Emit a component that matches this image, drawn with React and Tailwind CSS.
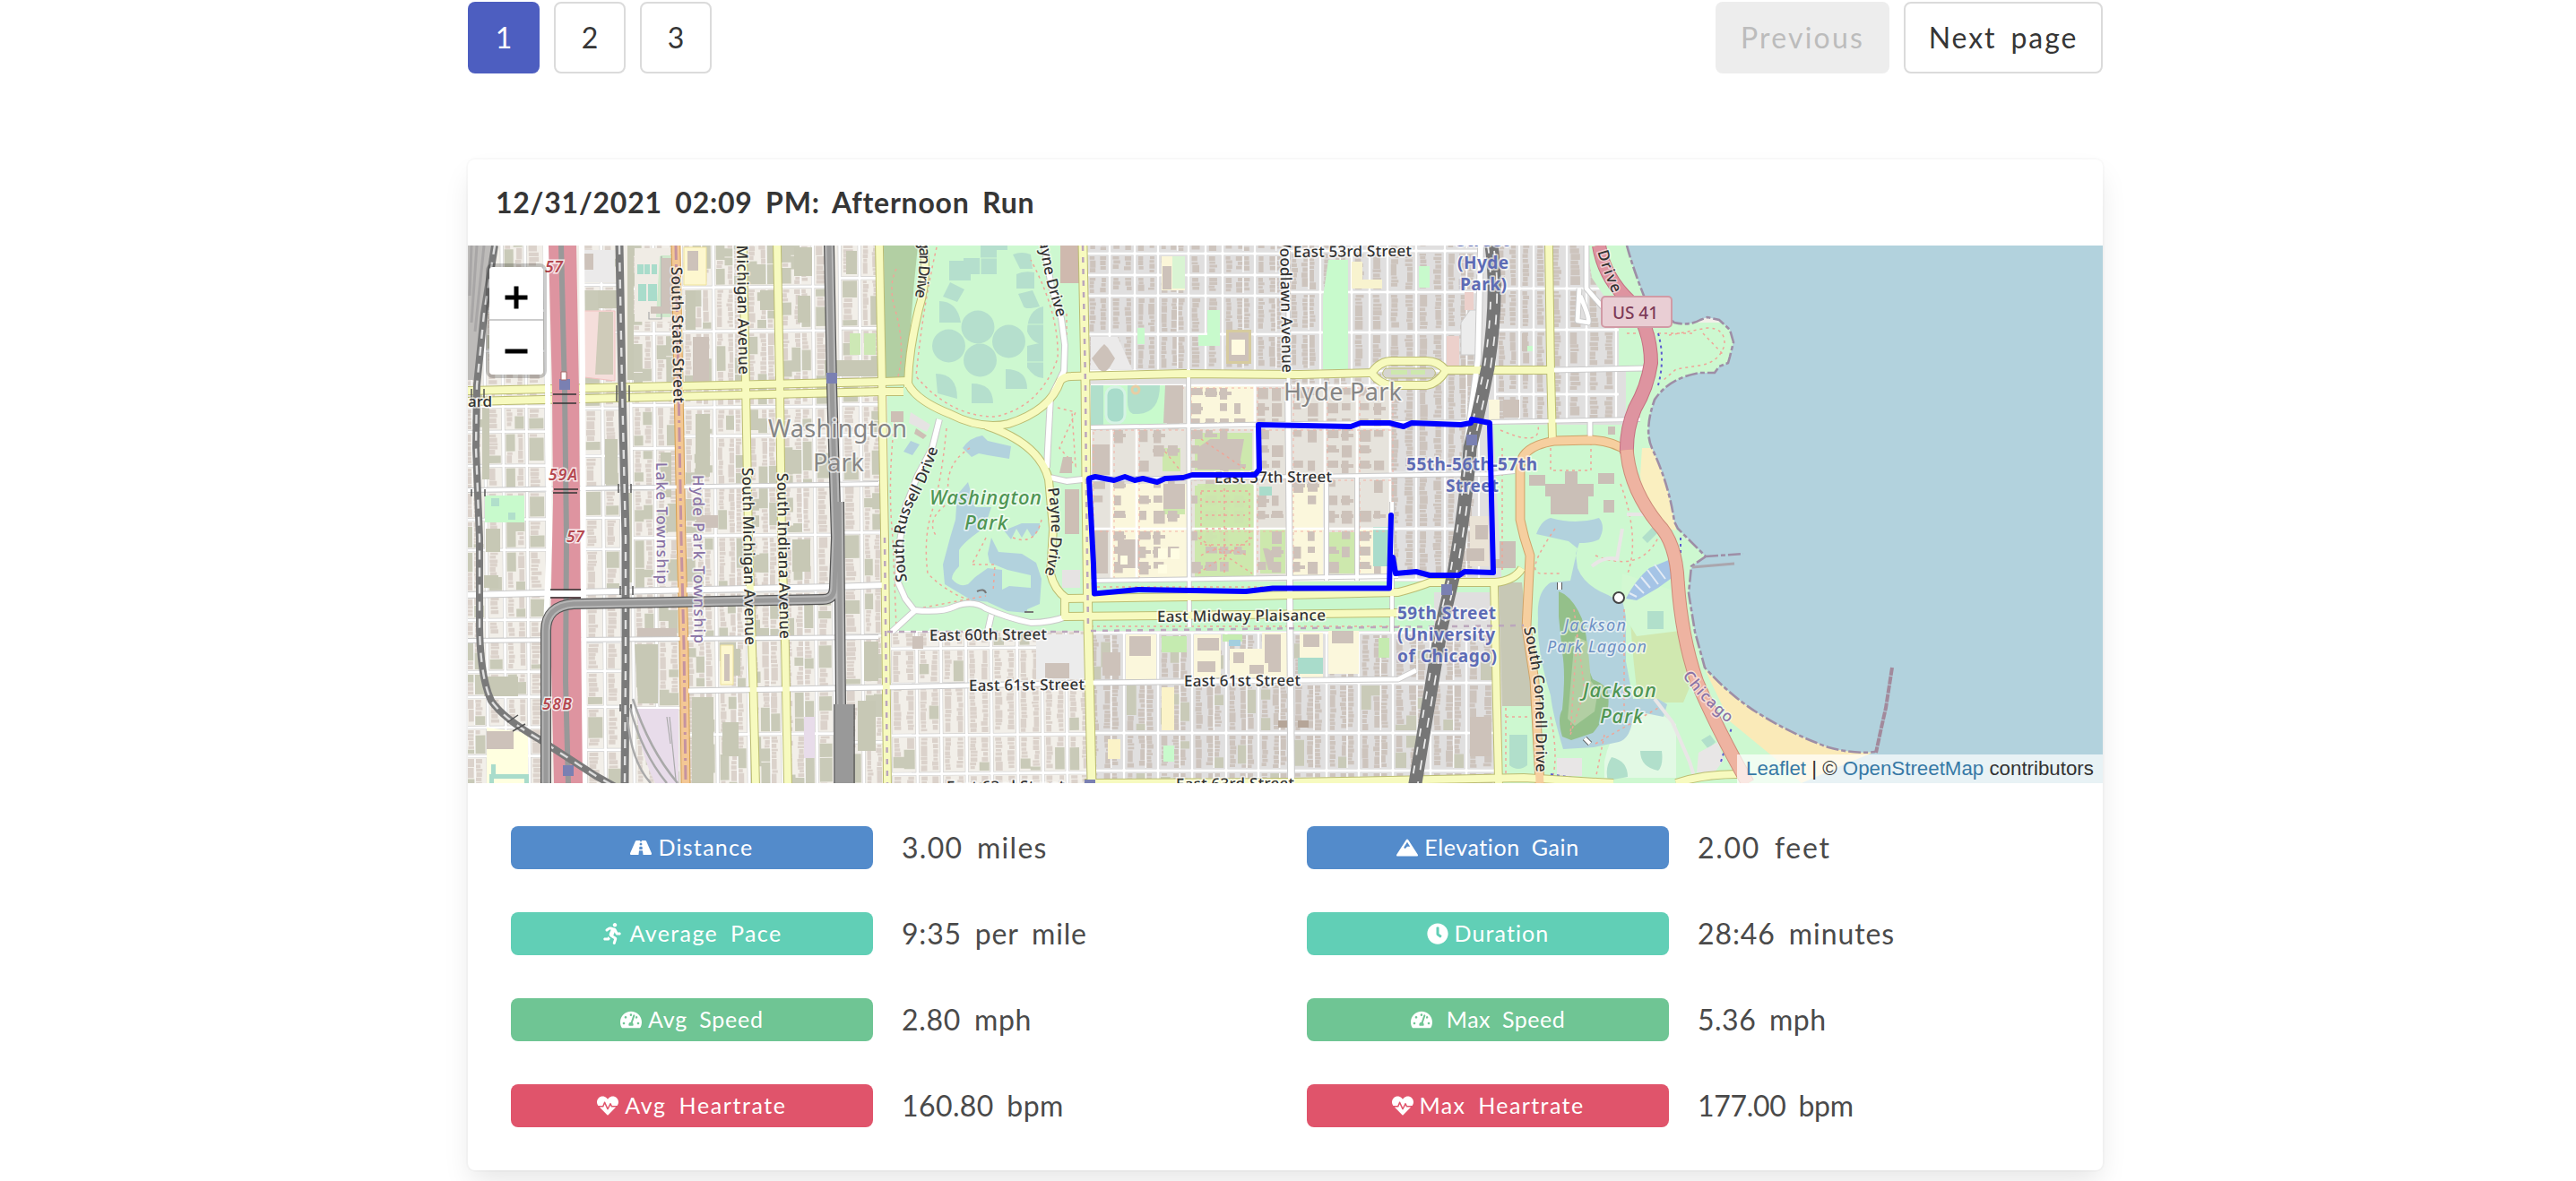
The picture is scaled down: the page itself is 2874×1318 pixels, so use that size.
import React from "react";
import { FaRoad, FaMountain, FaRunning, FaClock, FaTachometerAlt, FaHeartbeat } from "react-icons/fa";

/* ---------- map geometry ---------- */

// Small deterministic generator so that the city blocks are the same on each render.
function random(seed) {
  let s = seed;
  return () => {
    s = (s * 1664525 + 1013904223) % 4294967296;
    return s / 4294967296;
  };
}

const rect = (x, y, w, h) => `M${x.toFixed(1)} ${y.toFixed(1)}h${w.toFixed(1)}v${h.toFixed(1)}h${(-w).toFixed(1)}z`;

function cityBlocks({ xs, ys, seed, parcelChance, courts = false }) {
  const r = random(seed);
  let buildings = "";
  let parcels = "";
  let alleys = "";
  for (let i = 0; i < xs.length - 1; i++) {
    for (let j = 0; j < ys.length - 1; j++) {
      const x0 = xs[i] + 3;
      const y0 = ys[j] + 3;
      const w = xs[i + 1] - xs[i] - 6;
      const h = ys[j + 1] - ys[j] - 6;
      if (w < 5 || h < 5) continue;
      if (courts) {
        for (let yy = y0; yy < y0 + h - 6; yy += 17) {
          for (let xx = x0; xx < x0 + w - 6; xx += 16) {
            if (r() < 0.78) {
              buildings += rect(xx, yy, 7 + r() * 6, 7 + r() * 8);
              if (r() < 0.5) buildings += rect(xx - 1, yy + 4, 14, 4);
            }
          }
        }
        continue;
      }
      const n = Math.max(1, Math.round(w / 11));
      const cw = w / n;
      for (let c = 0; c < n; c++) {
        let y = y0;
        const cx = x0 + c * cw;
        while (y < y0 + h - 3) {
          if (r() < parcelChance) {
            const ph = Math.min(8 + r() * 26, y0 + h - y);
            parcels += rect(cx, y, cw, ph);
            y += ph + 1;
            continue;
          }
          const bh = Math.min(2.5 + r() * (r() < 0.2 ? 12 : 3), y0 + h - y);
          const bw = cw * (0.45 + r() * 0.25);
          buildings += rect(cx + (c % 2 ? cw - bw - 1 : 1) + (r() - 0.5), y, bw, bh);
          y += bh + 0.4 + r() * 0.9;
        }
        if (c % 2 === 1 && c < n - 1) alleys += `M${(cx + cw).toFixed(1)} ${y0}v${h}`;
      }
    }
  }
  const streets =
    xs.map((x) => `M${x} ${ys[0]}V${ys[ys.length - 1]}`).join("") +
    ys.map((y) => `M${xs[0]} ${y}H${xs[xs.length - 1]}`).join("");
  return { buildings, parcels, alleys, streets };
}

const ZONES = [
  { xs: [500, 541, 561, 587, 609], ys: [250, 300, 345, 390, 432, 452, 480, 518, 546, 578, 612, 660, 690, 712, 748, 776, 810, 842, 900], seed: 11, parcelChance: 0.1 },
  { xs: [650, 672, 692], ys: [250, 317, 370, 430, 455, 508, 545, 577, 612, 660, 715, 748, 788, 836, 900], seed: 23, parcelChance: 0.08 },
  { xs: [704, 730, 757], ys: [250, 322, 372, 430, 452, 500, 545, 600, 660, 714, 790, 900], seed: 29, parcelChance: 0.14 },
  { xs: [761, 797, 832, 870, 908, 928], ys: [250, 321, 370, 430, 455, 487, 543, 598, 660, 714, 771, 820, 900], seed: 37, parcelChance: 0.1 },
  { xs: [938, 960, 984], ys: [250, 312, 368, 425, 453, 487, 540, 596, 655, 711, 768, 830, 900], seed: 41, parcelChance: 0.14 },
  { xs: [990, 1020, 1047, 1075, 1103, 1132, 1160, 1187, 1214], ys: [706, 726, 766, 823, 866, 900], seed: 43, parcelChance: 0.045 },
  { xs: [1212, 1238, 1266, 1292, 1326, 1345, 1364, 1400, 1437], ys: [250, 283, 307, 330, 373, 414], seed: 53, parcelChance: 0, east: true },
  { xs: [1437, 1473, 1508, 1528, 1548, 1580, 1612, 1650], ys: [250, 280, 326, 371, 414, 472, 528, 590, 647], seed: 59, parcelChance: 0, east: true },
  { xs: [1668, 1695, 1711, 1728, 1748, 1770, 1803, 1835], ys: [250, 322, 368, 412, 440, 470], seed: 61, parcelChance: 0, east: true },
  { xs: [1214, 1254, 1292, 1330, 1368, 1404, 1441, 1480, 1516, 1554, 1596, 1636, 1668], ys: [706, 762, 818, 860, 900], seed: 67, parcelChance: 0.035, east: true },
];
const CAMPUS = cityBlocks({ xs: [1217, 1240, 1268, 1326, 1400, 1440, 1478, 1514, 1551], ys: [430, 477, 533, 590, 647], seed: 71, parcelChance: 0, courts: true });
const CITY = ZONES.map((z) => ({ ...cityBlocks(z), east: z.east }));

// Roads: colour of the line, colour of its edge, width, path
const ROADS = [
  ["#fff", "#c9c9c9", 6, "M522 664L640 661L930 655L986 653"],
  ["#fff", "#c9c9c9", 5, "M765 771L986 767L1215 762L1560 758L1580 748"],
  ["#fff", "#c9c9c9", 4, "M522 547L980 540M522 715L980 711M1217 477L1440 473L1660 471L1830 468M1217 535L1660 529L1690 526"],
  ["#fff", "#c9c9c9", 4, "M1217 648L1560 643M1326 412L1327 700M1437 280L1439 874M1480 530V648M1514 530V648M1553 560V705"],
  ["#fff", "#c9c9c9", 6, "M1437 430L1441 874M1652 274L1649 400L1633 520"],
  ["#fff", "#c9c9c9", 6, "M1165 274L1173 320L1184 355L1188 385L1187 414L1172 444L1169 500L1168 522M1172 533L1190 537L1208 535"],
  ["#fff", "#c9c9c9", 6, "M1048 468L1040 500L1024 530L1010 566L1003 610L1002 650L1010 668L1020 681Q1050 684 1065 677Q1085 669 1100 679Q1125 690 1150 695Q1172 695 1190 688M1020 682L995 705M1106 686L1102 704"],
  ["#fff", "#c9c9c9", 5, "M1733 413L1835 411M1770 274V322L1790 345M1762 322L1760 358L1772 360Q1774 355 1763 330M1774 470V492"],
  ["#f7fabf", "#bcbd72", 8, "M522 436L985 426L1013 425L1013 432M522 448L985 437L1008 437"],
  ["#f7fabf", "#bcbd72", 8, "M829 274L832 430L835 600L840 750L843 874M867 274L870 430L872 600L876 720L879 874"],
  ["#f7fabf", "#bcbd72", 8, "M981 274L984 430L987 600L990 874"],
  ["#f7fabf", "#bcbd72", 8, "M1030 274Q1036 310 1025 345Q1014 390 1013 428Q1022 447 1060 462Q1095 480 1125 473Q1172 458 1183 425Q1187 420 1195 420L1320 417L1450 418L1530 416Q1540 403 1552 403L1592 403Q1604 403 1613 413L1733 413M1530 416Q1540 429 1552 430L1592 430Q1604 428 1613 414"],
  ["#f7fabf", "#bcbd72", 8, "M1100 475Q1160 495 1170 535L1175 590L1172 640Q1176 658 1190 668L1400 665L1560 661Q1580 656 1595 650L1668 650Q1690 648 1698 634M1188 664V688L1300 687L1560 684"],
  ["#f7fabf", "#bcbd72", 9, "M1208 274L1211 430L1212 550L1214 700L1218 874"],
  ["#f7fabf", "#bcbd72", 8, "M1728 274L1730 410L1732 492M1667 650L1670 790L1672 874"],
  ["#f7fabf", "#bcbd72", 8, "M1210 874L1440 873L1700 868L1800 874M1870 874Q1900 864 1938 864"],
  ["#f6cf9f", "#cfa46a", 9, "M1818 505Q1800 492 1775 491L1735 492Q1696 498 1696 522L1696 580Q1700 600 1707 620L1703 700L1712 760L1718 874"],
  ["#f3c795", "#d5a050", 9, "M754 274L757 430L760 600L763 720L765 874"],
];

const RAIL = [
  [8, "M552 274L540 350L532 430L531 500L535 600L535 700Q536 756 548 782Q562 802 600 824L665 866L690 880"],
  [9, "M691 274L694 430L698 600L698 740L697 874"],
];

const EL_LINE = "M925 274L928 430L933 600L931 655Q931 669 918 669L640 674Q609 676 609 704V874";

const COAST = "M1815 274Q1822 300 1836 335L1868 360Q1885 364 1897 357L1905 354L1918 357L1930 368L1934 382L1930 398L1928 405L1918 409L1913 416L1896 416Q1862 422 1846 446Q1834 480 1843 500Q1862 540 1868 582L1872 590L1903 621L1887 632L1884 662L1891 705L1902 745Q1930 776 1960 795Q2000 820 2040 834Q2070 842 2092 839";

/* label: text, x, y, rotation, length, size, colour, weight, slant */
const LABELS = [
  ["Hyde Park", 1432, 447, 0, 132, 27, "#858585", 400],
  ["Washington", 857, 488, 0, 155, 27, "#858585", 400],
  ["Park", 907, 526, 0, 57, 27, "#858585", 400],
  ["Washington", 1037, 563, 0, 125, 22, "#4f9553", 500, "italic"],
  ["Park", 1076, 591, 0, 48, 22, "#4f9553", 500, "italic"],
  ["Jackson", 1766, 778, 0, 82, 22, "#4f9553", 500, "italic"],
  ["Park", 1785, 807, 0, 48, 22, "#4f9553", 500, "italic"],
  ["Jackson", 1745, 704, 0, 69, 18, "#6d90c4", 400, "italic"],
  ["Park Lagoon", 1726, 728, 0, 111, 18, "#6d90c4", 400, "italic"],
  ["Street", 1625, 275, 0, 59, 19, "#5d6bb5", 700],
  ["(Hyde", 1626, 300, 0, 57, 19, "#5d6bb5", 700],
  ["Park)", 1629, 324, 0, 52, 19, "#5d6bb5", 700],
  ["55th-56th-57th", 1569, 525, 0, 146, 19, "#5d6bb5", 700],
  ["Street", 1613, 549, 0, 59, 19, "#5d6bb5", 700],
  ["59th Street", 1559, 691, 0, 110, 19, "#5d6bb5", 700],
  ["(University", 1559, 715, 0, 109, 19, "#5d6bb5", 700],
  ["of Chicago)", 1559, 739, 0, 111, 19, "#5d6bb5", 700],
  ["East 53rd Street", 1443, 287, -0.5, 132, 17, "#333", 500],
  ["East 57th Street", 1355, 539, -0.5, 131, 17, "#333", 500],
  ["East Midway Plaisance", 1291, 694, -0.5, 188, 17, "#333", 500],
  ["East 60th Street", 1037, 715, -0.6, 131, 17, "#333", 500],
  ["East 61st Street", 1081, 771, -0.6, 129, 17, "#333", 500],
  ["East 61st Street", 1321, 766, -0.4, 130, 17, "#333", 500],
  ["East 63rd Street", 1312, 881, -0.4, 132, 17, "#333", 500],
  ["East 63rd Street", 1056, 884, -0.4, 132, 17, "#333", 500],
  ["ard", 522, 454, 0, 27, 17, "#333", 500],
  ["South Michigan Avenue", 821, 220, 89, 198, 17, "#333", 500],
  ["South State Street", 749, 298, 89, 152, 17, "#333", 500],
  ["Lake Township", 732, 516, 89.5, 136, 17, "#8973a6", 500],
  ["Hyde Park Township", 773, 530, 89.5, 188, 17, "#8973a6", 500],
  ["South Michigan Avenue", 828, 522, 89, 198, 17, "#333", 500],
  ["South Indiana Avenue", 867, 528, 89, 185, 17, "#333", 500],
  ["South Woodlawn Avenue", 1427, 207, 89, 209, 17, "#333", 500],
];

const CURVED = [
  ["russell", "M1012 649Q1002 590 1021 560Q1036 535 1048 496", "South Russell Drive", 156, "#333"],
  ["payne-s", "M1169 545Q1178 595 1166 640L1164 660", "Payne Drive", 97, "#333"],
  ["payne-n", "M1158 258Q1163 300 1172 330L1184 370", "Payne Drive", 99, "#333"],
  ["morgan", "M1022 240Q1030 290 1021 331L1019 350", "Morgan Drive", 92, "#333"],
  ["cornell", "M1700 701Q1710 745 1713 780L1714 875", "South Cornell Drive", 162, "#333"],
  ["shore", "M1770 220Q1778 280 1798 325L1810 350", "Shore Drive", 112, "#333"],
  ["chicago", "M1877 754Q1896 782 1929 808L1940 816", "Chicago", 74, "#8973a6"],
];

const ROUTE = "M1552 575L1550 656.5L1420 656.5L1390 660L1270 658L1221 662.5L1220 630L1215 534L1222 532L1243 536L1255 532L1266 536L1275 534L1291 538L1300 534L1320 533L1330 530L1400 530L1405 524L1404 474L1507 476L1518 472L1550 472L1566 476L1575 472L1630 474L1641 472L1642 468L1662 472L1666 639L1634 638L1628 642L1595 642L1580 638L1557 640L1554 622";

function Foot({ d, c = "#f0a598", w = 1.5 }) {
  return <path d={d} fill="none" stroke={c} strokeWidth={w} strokeDasharray="3 4" />;
}

function CityMap() {
  return (
    <svg className="block h-full w-full" viewBox="522 274 1824 600" fontFamily='"Noto Sans", sans-serif'>
      <rect x="522" y="274" width="1824" height="600" fill="#f2efe9" />
      <rect x="1212" y="274" width="640" height="600" fill="#e0dfdf" />

      {/* city blocks */}
      {CITY.map((z, i) => (
        <g key={i} transform={z.east ? undefined : "rotate(-0.5 760 430)"}>
          <path d={z.parcels} fill="#c9cab8" />
          <path d={z.buildings} fill={z.east ? "#cdc4bd" : "#dbd2cb"} />
          <path d={z.alleys} stroke="#fafafa" strokeWidth="1.4" fill="none" />
          <path d={z.streets} stroke="#cfcfcf" strokeWidth="4" fill="none" />
          <path d={z.streets} stroke="#fff" strokeWidth="2.8" fill="none" />
        </g>
      ))}

      {/* vacant lots, yards and schools in the west */}
      <g fill="#c7c8b5">
        <path d="M667 324h22v20h-22zM538 455h8v80h-8zM765 324h11v44h-11zM848 324h17v22h-17zM920 402h56v18h-56zM708 719h26v66h-22zM772 778h24v96h-24zM806 806h18v38h-18zM700 274h7v150h-7zM886 276h20v32h-20zM890 330h14v30h-14zM944 280h12v26h-12zM952 402h26v18h-26zM540 642h16v14h-16zM540 755h38v22h-38zM675 490h14v50h-14zM737 505h12v50h-12zM700 550h5v100h-5zM964 716h16v44h-16zM957 782h20v56h-20zM776 462h16v70h-16zM884 602h20v36h-20zM810 724h16v30h-16zM542 590h16v26h-16z" />
      </g>
      <path d="M652 347h34v78l-34 -4z" fill="#f5dedb" stroke="#f3c1c0" />
      <path d="M668 348h16v70h-20z" fill="#cfcbb9" />
      <path d="M650 279h36v36h-36z" fill="#ebeaea" />
      <path d="M708 277h40v82h-40z" fill="#f0ece5" />
      <path d="M736 286h12v68h-16zM738 286h-1v-1h12v3z" fill="#cfe9cc" />
      <path d="M711 791h46v83h-26q-20-40-20-83z" fill="#e8dcea" />
      <path d="M738 286v70h-14l0-8M744 800l4 30M747 800l7 70" fill="none" stroke="#aaa" strokeWidth="1.2" />
      <path d="M541 553h44v30h-44z" fill="#c8facc" />
      <path d="M548 556h9v9h-9zM567 572h8v8h-8z" fill="#b1dfcb" />
      <path d="M543 812l46 6v56h-46z" fill="#ffffe0" />
      <path d="M522 274h28l-14 150h-14z" fill="#bdbbb9" />
      <g fill="#a9dccb">
        <path d="M711 295h7v11h-7zM719 295h6v11h-6zM727 295h6v11h-6zM712 317h9v19h-9zM723 317h10v19h-10z" />
        <path d="M548 853h5v12h-5zM546 864h44v10h-5v-5h-34v5h-5z" />
      </g>
      <path d="M948 372h12v24h-12zM964 372h13v24h-13z" fill="#cde8b5" />
      <path d="M763 276h25v42h-25z" fill="#fdf7cf" stroke="#eee29b" />
      <path d="M804 720h14v44h-14z" fill="#fdf7cf" stroke="#eee29b" />
      <path d="M897 800h12v46h-12z" fill="#e8dcea" />
      <g fill="#cdc2ba">
        <path d="M738 288h12v62h-24v-8h12zM773 376h18v50h-18zM767 280h12v22h-12zM650 283h12v18h-12zM711 701h44v11h-44zM543 816h30v20h-30zM1018 710h12v14h-12zM1640 800h24v44h-24zM777 575h24v14h-24zM808 730h6v30h-6z" />
      </g>
      <path d="M1156 708h54v50h-54z" fill="#ececec" />
      <path d="M1166 740h27v17h-27z" fill="#cdc2ba" />

      {/* lots in the east */}
      <path d="M1296 286h26v38h-26z" fill="#fbf6d8" />
      <path d="M1308 286h14v36h-14z" fill="#d9f4d3" />
      <path d="M1297 297h10v26h-10z" fill="#cdc2ba" />
      <path d="M1347 346h14v40h-24v-12h10zM1269 366h8v18h-8z" fill="#c8facc" />
      <path d="M1368 368h28v38h-28z" fill="#d6cb9f" />
      <path d="M1371 371h22v32h-22z" fill="#cdc2ba" />
      <path d="M1374 379h15v17h-15z" fill="#fffbe0" />
      <path d="M1217 376h30l16 36h-46z" fill="#ebeaea" />
      <path d="M1218 400l10-12 4-4 4 4 8 12 -6 10 -6 6 -6-4z" fill="#cdc2ba" />
      <path d="M1482 290h22v122h-28v-80z" fill="#c8facc" />
      <path d="M1508 292h12v20h22v10h-34z" fill="#f8f3cf" />
      <path d="M1583 297h12v24h-12zM1700 386h10v6h-10z" fill="#c8facc" />
      <path d="M1640 346l8 0 0 50 -18 0 0-36z" fill="#ececec" stroke="#ccc" />
      <path d="M1634 326h10v20h-10zM1614 375h14v34h-14z" fill="#ecd0cb" />
      <path d="M1698 372h6v20h-6zM1677 446h18v20h-18z" fill="#cdc2ba" />
      <path d="M1661 446h12v24h-12z" fill="#fbf7dc" />

      {/* university campus */}
      <path d="M1217 430h334v218h-334z" fill="#e6e3dc" />
      <path d="M1240 540h86v106h-86zM1327 430h73v46h-73zM1440 540h36v104h-36zM1516 590h34v50h-34z" fill="#fbf7dc" />
      <path d="M1333 542h66v102h-66zM1333 483h64v42h-64zM1297 500h20v26h-20zM1406 590h28v50h-28zM1482 594h30v46h-30zM1298 548h24v26h-24z" fill="#cde8ad" />
      <path d={CAMPUS.buildings} fill="#cdc2ba" />
      <path d="M1336 540h62v70h-62z" fill="#cde8ad" fillOpacity="0.9" />
      <path d="M1350 490h38l-6 34h-46v-24zM1247 602h24v32h-24zM1298 540h24v28h-24zM1218 496h20v34h-20zM1222 592h14v48h-14z" fill="#cdc2ba" />
      <path d="M1250 620h8v10h-8zM1292 612h10v12h-10zM1306 612h10v12h-10zM1292 630h10v10h-10z" fill="#fffde3" />
      <path d="M1532 588h18v44h-18zM1405 543h14v10h-14z" fill="#a9dccb" />
      <path d="M1409 612q8-2 12 8v16h-6z" fill="#cdc2ba" />
      <path d={CAMPUS.streets} stroke="#fff" strokeWidth="2.6" fill="none" />
      <path d={CAMPUS.streets} stroke="#f3b2a6" strokeWidth="1" strokeDasharray="3 4" fill="none" transform="translate(3 3)" />
      <Foot d="M1340 548h54v60h-54zM1340 620q20-14 52 0M1366 545v98M1340 490l50 34M1300 504l16 20M1337 640l60-40M1337 600l60 40M1345 560h44M1345 575h44M1345 590h44" />
      {/* athletic field */}
      <path d="M1217 430h83v44h-83z" fill="#c8facc" />
      <path d="M1217 430h14v44h-14z" fill="#b1dfcb" />
      <path d="M1258 430h36q0 34-30 32q-6-2-6-14z" fill="#b1dfcb" />
      <rect x="1234" y="432" width="21" height="40" rx="9" fill="#a9dccb" stroke="#d5f3e4" strokeWidth="3" />
      <circle cx="1267" cy="435" r="4" fill="none" stroke="#e6cda4" strokeWidth="3" />
      <path d="M1300 430h20v42h-22z" fill="#cdc2ba" />

      {/* midway */}
      <path d="M1190 649h480v12l-70 0v43h-410z" fill="#c9f7cd" />
      <path d="M1193 672h16v11h-16z" fill="#cde8ad" stroke="#efaea0" strokeDasharray="2 3" />
      <Foot d="M1217 655h330M1217 699h345" />
      <g>
        <path d="M1256 708h34v50h-34zM1332 708h30v48h-30zM1450 706h26v50h-26zM1372 724h56v34h-56zM1408 706h28v50h-28zM1482 704h34v48h-34z" fill="#fbf7dc" />
        <path d="M1260 710h24v22h-24zM1336 712h24v14h-24zM1336 738h20v12h-20zM1411 708h18v42h-14v-10h-4zM1486 704h24v14h-24zM1230 728h20v26h-20zM1454 708h18v14h-18zM1376 728h12v12h-12zM1394 742h16v10h-16z" fill="#cdc2ba" />
        <path d="M1448 734h28v18h-28z" fill="#a9dccb" />
        <path d="M1296 710h28v18h-28zM1538 712h12v22h-12zM1364 708h22v8h-22z" fill="#c5ebb0" />
        <path d="M1371 714h13v7h-13z" fill="#a3cfdf" />
        <path d="M1296 767h14v48h-14zM1236 825h14v22h-14z" fill="#fbf3c8" />
        <path d="M1298 832h12v18h-12z" fill="#c8facc" />
        <path d="M1426 804h14v8h-14zM1448 804h12v8h-12z" fill="#b5a598" />
      </g>

      {/* Washington Park */}
      <path d="M988 274H1206L1210 704H993Z" fill="#cdf8d0" />
      <path d="M986 274H1024Q1016 350 1012 424H987Z" fill="#b2cfa3" />
      <path d="M1183 274h22v42h-22z" fill="#cfb9ae" />
      <g fill="#b5dfcd">
        <circle cx="1091" cy="365" r="18.5" />
        <circle cx="1058.500" cy="386" r="18.500" />
        <circle cx="1125.500" cy="381" r="18.500" />
        <circle cx="1093.500" cy="402" r="18.500" />
        <path d="M1059 291h16v-3h18v18h-10v7h-24zM1094 274h30v5h-12v27h-18zM1060 315l16 8-8 14-16-6zM1048 336q20 0 24 24h-24zM1130 284q10-4 20 0l2 16h-14zM1134 306q8-4 20-2v18h-20zM1136 328l16-4 8 18q-16 4-18 0zM1164 342v42q-12 0-18-14q0-24 18-28zM1164 382v40q-10 0-18-12v-24zM1044 417q24 0 24 28l-22-6zM1122 412q24 0 24 22l-24 0zM1084 428q24 0 24 22l-24 0z" />
      </g>
      <path d="M1094 288h18M1094 288v18M1146 362h18M1146 404h18" stroke="#cdf8d0" strokeWidth="1" />
      <g fill="#b2d2dd">
        <path d="M1074 500q8-12 22-14l6 6 26 6-2 14-24-4-10-2-8 4zM1008 504l8-12 10 4-8 12z" />
        <path d="M1068 552l12-14 8 28h18l-4 12-8 14q-20 14-24 22l0 18q-8 8-8 14q8 10 18 6l8-8 14-10 16 2 0 28-12 8-22-2-30-18-2-22 8-30 6-20z" />
        <path d="M1106 600l8 16 26 2 16 10 6 18-2 28-14 6 0 4-22-2-22-10 0-6 24-12 24 2 0-14-26-6-20-8-2-10zM1120 592l8 10 6-12 6 10 6-10 6 10 8-10v-6l-20 0z" />
      </g>
      <Foot d="M1045 276Q1030 340 1022 420Q1060 465 1110 465Q1160 455 1180 400Q1182 350 1150 290M1000 300Q990 320 1000 350Q1010 390 1002 420" />
      <Foot d="M1056 478Q1050 540 1040 570Q1030 600 1035 640Q1060 665 1090 672M1060 560Q1030 580 1046 600M1082 500Q1050 520 1060 560M1100 600Q1090 620 1084 630L1110 630L1108 660M1130 600Q1155 610 1162 580M1180 455L1200 460L1182 500L1200 520L1196 460M1190 350V420" />
      <Foot d="M998 470Q990 540 996 600L1000 700M1030 678L1100 665" />
      <path d="M1016 460l22 14-4 8-20-10z" fill="#e6e3e3" />
      <path d="M994 459h14v12h-14zM1022 478l12 8-4 4-10-6zM1186 510h10v18h-14zM1188 546h16v50h-16z" fill="#cdbfb5" />
      <path d="M1185 636h20v20h-20z" fill="#e6e3e3" />
      <path d="M1090 660q8-4 10 2M1143 683h10" fill="none" stroke="#777" strokeWidth="2" />

      {/* lakefront parks */}
      <path d="M1770 274H1822L1850 360H1940V420H1880L1850 450V500L1880 600L1910 622L1892 640L1910 740L2000 830L2090 840L2060 874H1676V660L1666 474H1812V412H1806V355L1776 310Z" fill="#cdf8d0" />
      <path d="M1806 411h8v60h-8z" fill="#e0dfdf" />
      <path d="M1672 650h26q8 70 12 138h-34z" fill="#c7c8b5" />
      <path d="M1818 672l50 8 20 80-10 24h-50q-8-60-10-112z" fill="#d0e8b0" />
      <path d="M1810 640l60 20 4 44-48 6-18-30z" fill="#d3f8d2" />
      <path d="M1838 682h18v20h-18z" fill="#b1dfcb" />
      <path d="M1790 850q10-50 50-62l30 20 0 60-80 0z" fill="#e2f9e4" />
      <path d="M1832 500L1846 500Q1862 540 1870 592L1862 590Q1832 560 1830 530Z" fill="#faefc0" />
      <path d="M1902 747Q1930 776 1960 795Q2000 820 2040 834Q2070 842 2092 839L2010 874L1980 846L1930 805Z" fill="#faeab8" />
      <g fill="#b2d2dd">
        <path d="M1714 596q6-16 16-18q28 8 54 0q8 10 0 24q-8 4-22 4l-4 12 2 16q8 20 34 30q10 6 16 6l4 18 0 50 8 42 28 0 10 6-4 14-20-4-14 2q-2 26-16 30l-28 6-34 2q-12-40-14-60q-16-50-14-86q-2-30 14-40l22-2 4-18 4-18-10-8z" />
        <path d="M1814 668q10-20 26-34l24-10 12 4-4 12-22 16-24 14z" fill="#a5c4e6" />
      </g>
      <path d="M1818 662l8 4M1824 652l10 10M1831 644l10 12M1838 636l12 16M1846 630l12 16" stroke="#e3ebf5" strokeWidth="2" />
      <path d="M1739 660q12 4 22 22q8 14 10 40q-2 20 6 36l8 4 8 6q4 20-2 30q-10 16-14 20l-24 8-10-4q-6-20 0-30q4-40 0-64l-4-40z" fill="#94c08a" />
      <path d="M1757 710l14 6 4 44 8 10-4 24-22 16-8-8z" fill="#b2cfa3" />
      <circle cx="1806" cy="667" r="6" fill="#fff" stroke="#444" strokeWidth="2" />
      <path d="M1740 650v8M1768 824l6 6" stroke="#555" strokeWidth="6" />
      <path d="M1740 650v8M1768 824l6 6" stroke="#fff" strokeWidth="4" />
      <g fill="#cabfb7">
        <path d="M1746 526h14v14h18v14h-6v20h-42v-20h-6v-14h22zM1706 530h18v12h-18zM1783 528h18v12h-18zM1789 558h12v14h-12zM1794 476h8v9h-8z" />
        <path d="M1673 604h18v30h-26v-10h8z" />
      </g>
      <path d="M1640 576h22v56h-22z" fill="#eae3d6" />
      <path d="M1646 586h14v16h-14zM1636 612h20v14h-20z" fill="#cabfb7" />
      <g fill="#b1dfcb">
        <path d="M1684 820h20v34q-10 8-20 0zM1798 845q18 4 18 22l-22 4q-4-14 4-26zM1830 838h24q2 16-4 22q-20-4-20-22zM1832 600l14-14 6 6-14 14zM1898 826l10-6 6 8-8 8z" />
      </g>
      <path d="M1895 840l22-12 6 20-10 14-20 0zM1737 846h28v20h-28z" fill="#e8e6e6" />
      <Foot d="M1674 480Q1720 500 1716 475M1676 500V640M1735 590Q1700 640 1720 640L1740 640M1780 620Q1830 640 1850 600M1808 540Q1830 600 1816 640M1812 680L1812 800M1780 830L1850 790M1730 800Q1740 850 1730 874M1790 820L1780 870M1756 680L1768 770L1752 820L1760 700" />
      <Foot d="M1730 500V525H1775V492M1680 790V874M1680 800H1708M1815 372L1890 372M1862 374L1905 366Q1925 366 1924 385Q1918 405 1895 408L1870 412L1856 424M1900 372L1922 395" />
      <Foot d="M1850 372Q1858 400 1850 430M1875 600V630M1920 850L1932 812M1730 864L1790 874" c="#5b5bd0" w={2} />
      <path d="M1815 574Q1835 574 1840 574M1776 632Q1790 620 1804 624L1810 590M1846 780L1866 806L1885 850L1890 866" stroke="#e9e6e6" strokeWidth="4" fill="none" />

      {/* lake */}
      <path d={COAST + "L2060 852L2010 874H2346V274Z"} fill="#b2d2dd" />
      <path d={COAST + "M1903 621L1945 618"} fill="none" stroke="#9e8ea6" strokeWidth="2.6" strokeDasharray="14 3 5 3" />
      <path d="M1888 633L1935 629" stroke="#aaa6ad" strokeWidth="3" />
      <path d="M2111 745L2104 790L2099 812L2093 840" stroke="#a28a9c" strokeWidth="4" strokeDasharray="9 1" fill="none" />

      {/* roads */}
      {ROADS.map(([, edge, w, d], i) => (
        <path key={i} d={d} fill="none" stroke={edge} strokeWidth={w + 1.8} strokeLinejoin="round" />
      ))}
      {ROADS.map(([c, , w, d], i) => (
        <path key={i} d={d} fill="none" stroke={c} strokeWidth={w - 0.2} strokeLinejoin="round" />
      ))}
      <path d="M1546 411h52q7 5 0 11h-52q-7-5 0-11z" fill="#d6d5cf" stroke="#bcbd72" />
      <path d="M1552 413h18v5h-18zM1574 413h16v5h-16z" fill="#cde8ad" />
      <path d="M754 274L757 430L760 600L763 720L765 874" fill="none" stroke="#c593a0" strokeWidth="3" strokeDasharray="16 5 3 5" />
      <path d="M1208 274L1211 430L1212 550L1214 700M987 600L990 874M990 705H1210M1217 704L1700 698" fill="none" stroke="#bba6bc" strokeWidth="2.500" strokeDasharray="6 7" />

      {/* expressway */}
      <path d="M609 274L611 430L613 600L609 700M649 274L650 420L652 874" stroke="#fff" strokeWidth="6" fill="none" />
      <path d="M612 274L616 437L617 560L614 700L618 874H650L648 690L646 437L643 274Z" fill="#de94a0" />
      <path d="M626 274L630 437L632 600L631 760L634 874" fill="none" stroke="#999" strokeWidth="6" />
      <path d="M617 440h26M617 450h26M618 546h27M617 550h27" stroke="#333" strokeWidth="1.500" />
      <path d="M613 659h40v7h-40z" fill="#fff" />
      <path d="M614 658h34M614 667h34" stroke="#333" strokeWidth="1.500" />
      <path d="M1784 274Q1790 310 1818 336Q1842 365 1842 405Q1838 432 1824 456Q1814 480 1815 506" fill="none" stroke="#c56f80" strokeWidth="16" />
      <path d="M1784 274Q1790 310 1818 336Q1842 365 1842 405Q1838 432 1824 456Q1814 480 1815 506" fill="none" stroke="#de94a0" strokeWidth="14" />
      <path d="M1815 502Q1818 545 1850 585Q1870 605 1872 650Q1876 710 1893 760Q1915 812 1950 874" fill="none" stroke="#cd8a78" strokeWidth="15.500" />
      <path d="M1815 502Q1818 545 1850 585Q1870 605 1872 650Q1876 710 1893 760Q1915 812 1950 874" fill="none" stroke="#eeb3a1" strokeWidth="13.500" />

      {/* railways */}
      <path d="M526 274L524 330M532 274L526 360M540 274L530 370" stroke="#a8a6a6" strokeWidth="3" fill="none" />
      {RAIL.map(([w, d], i) => (
        <g key={i} fill="none">
          <path d={d} stroke="#7a7a7a" strokeWidth={w} />
          <path d={d} stroke="#dedede" strokeWidth="2.4" strokeDasharray="10 9" />
        </g>
      ))}
      <g fill="none" stroke="#555" strokeWidth="1.500">
        <path d="M526 434v16M540 434v16M688 430v18M702 430v18M526 546v8M541 546v8M690 540v10M704 540v10M692 654v10M706 654v10M692 786v8M704 786v8M566 806l12-8M572 816l14-8" />
      </g>
      <path d="M703 790Q716 840 744 874M700 800Q704 850 726 874M706 780Q724 836 756 874" stroke="#a9a9a9" strokeWidth="2.500" fill="none" />
      <path d="M1664 274Q1672 330 1660 410Q1650 460 1640 500Q1636 560 1622 640L1608 700L1578 880" fill="none" stroke="#767676" strokeWidth="15" />
      <path d="M1660 274Q1668 330 1656 410Q1646 460 1636 500Q1632 560 1618 640L1604 700L1574 880" fill="none" stroke="#ececec" strokeWidth="1.800" strokeDasharray="9 12" />
      <path d="M1667 280Q1675 330 1663 410Q1653 460 1643 500Q1639 560 1625 640L1611 700L1581 880" fill="none" stroke="#ececec" strokeWidth="1.800" strokeDasharray="11 13" />
      <g fill="none" strokeLinejoin="round">
        <path d={EL_LINE + "M936 560L938 790"} stroke="#555" strokeWidth="12" />
        <path d={EL_LINE + "M936 560L938 790"} stroke="#b5b5b5" strokeWidth="9.500" />
        <path d={EL_LINE + "M936 560L938 790"} stroke="#999" strokeWidth="5" />
      </g>
      <path d="M932 786h20v88h-20z" fill="#999" />
      <path d="M931 786v88M953 786v88" stroke="#555" strokeWidth="1.500" />
      <path d="M624 423h12v12h-12zM922 416h12v12h-12zM628 854h12v12h-12zM1636 485h12v12h-12zM1608 652h12v12h-12zM1210 870h12v6h-12z" fill="#7a80b2" />
      <path d="M626 415h6v9h-6z" fill="#fff" stroke="#a66" />

      {/* labels */}
      {LABELS.map(([t, x, y, rot, len, size, c, weight, slant], i) => (
        <text key={i} x={x} y={y} transform={`rotate(${rot} ${x} ${y})`} textLength={len} fontSize={size} fontWeight={weight} fontStyle={slant || "normal"} fill={c} stroke="#fff" strokeOpacity="0.65" strokeWidth="3.500" strokeLinejoin="round" paintOrder="stroke">
          {t}
        </text>
      ))}
      {CURVED.map(([id, d, t, len, c]) => (
        <g key={id}>
          <path id={id} d={d} fill="none" />
          <text fontSize="17" fontWeight="500" fill={c} stroke="#fff" strokeOpacity="0.55" strokeWidth="3" strokeLinejoin="round" paintOrder="stroke" textLength={len}>
            <textPath href={`#${id}`}>{t}</textPath>
          </text>
        </g>
      ))}
      <g fontSize="17.500" fontStyle="italic" fontWeight="600" fill="#b5474f" stroke="#fff" strokeOpacity="0.8" strokeWidth="3" paintOrder="stroke">
        <text x="608" y="304" textLength="20">57</text>
        <text x="612" y="536" textLength="32">59A</text>
        <text x="632" y="605" textLength="20">57</text>
        <text x="605" y="792" textLength="33">58B</text>
      </g>
      <rect x="1787" y="331" width="78" height="34" rx="4" fill="#e9ced4" stroke="#d19aa5" strokeWidth="2" />
      <text x="1799" y="356" textLength="51" fontSize="19" fontWeight="500" fill="#7d3a57">US 41</text>

      <path d={ROUTE} fill="none" stroke="#0000ff" strokeWidth="6" strokeLinejoin="round" strokeLinecap="round" />
    </svg>
  );
}

/* ---------- page ---------- */

const STATS = [
  { icon: FaRoad, label: "Distance", value: "3.00 miles", tone: "bg-[#538bcb] tracking-[1.3px]", fit: "tracking-[1.3px]" },
  { icon: FaMountain, label: "Elevation Gain", value: "2.00 feet", tone: "bg-[#538bcb] tracking-[0.6px]", fit: "tracking-[1.7px]" },
  { icon: FaRunning, label: "Average Pace", value: "9:35 per mile", tone: "bg-[#61cfb6] tracking-[1.4px]", fit: "tracking-[0.8px]" },
  { icon: FaClock, label: "Duration", value: "28:46 minutes", tone: "bg-[#61cfb6] tracking-[1.1px]", fit: "tracking-[0.9px]" },
  { icon: FaTachometerAlt, label: "Avg Speed", value: "2.80 mph", tone: "bg-[#6fc594] tracking-[0.8px]", fit: "tracking-[0.7px]" },
  { icon: FaTachometerAlt, label: "Max Speed", value: "5.36 mph", tone: "bg-[#6fc594] tracking-[0.5px]", fit: "tracking-[0.5px]", gap: "gap-4" },
  { icon: FaHeartbeat, label: "Avg Heartrate", value: "160.80 bpm", tone: "bg-[#e0546b] tracking-[1.6px]", fit: "tracking-[0.4px]" },
  { icon: FaHeartbeat, label: "Max Heartrate", value: "177.00 bpm", tone: "bg-[#e0546b] tracking-[1.4px]", fit: "tracking-[-0.3px]" },
];

export default function App() {
  return (
    <div className="min-h-[1318px] overflow-hidden bg-white font-[Lato,sans-serif] text-[32px] text-[#363636] [word-spacing:6px]">
      <main className="ml-[522px] w-[1824px] pt-0.5">
        <nav className="flex h-20 items-center justify-between">
          <div className="flex gap-4">
            <button className="size-20 rounded-lg bg-[#4d5ec0] text-white">1</button>
            <button className="size-20 rounded-lg border-2 border-[#dbdbdb]">2</button>
            <button className="size-20 rounded-lg border-2 border-[#dbdbdb]">3</button>
          </div>
          <div className="flex gap-4">
            <button className="h-20 w-[194px] rounded-lg bg-[#ededed] tracking-[2.2px] text-[#bcbcbc]">Previous</button>
            <button className="h-20 w-[222px] rounded-lg border-2 border-[#dbdbdb] tracking-[1.9px] [word-spacing:6px]">Next page</button>
          </div>
        </nav>

        <article className="mt-24 h-[1128px] rounded-lg bg-white shadow-[0_16px_32px_-4px_rgba(10,10,10,0.1),0_0_0_2px_rgba(10,10,10,0.02)]">
          <header className="flex h-24 items-center px-[31px] font-bold tracking-[0.75px]">12/31/2021 02:09 PM: Afternoon Run</header>
          <div className="relative h-[600px] w-full overflow-hidden [word-spacing:0]">
            <CityMap />
            <div className="absolute left-5 top-5 flex w-[68px] flex-col rounded-lg border-4 border-black/20 bg-clip-padding">
              <button className="flex h-[60px] items-center justify-center rounded-t border-b-2 border-[#ccc] bg-white">
                <svg className="h-9 w-[26px]" viewBox="0 0 26 36"><path d="M13 10.500v25M0.500 23h25" stroke="#000" strokeWidth="5" /></svg>
              </button>
              <button className="flex h-[60px] items-center justify-center rounded-b bg-white">
                <svg className="size-[26px]" viewBox="0 0 26 26"><path d="M0.500 17h25" stroke="#000" strokeWidth="5" /></svg>
              </button>
            </div>
            <div className="absolute bottom-0 right-0 flex h-8 w-[408px] items-center justify-center whitespace-pre bg-white/70 font-[Liberation_Sans,sans-serif] text-[22.3px] text-[#333]">
              <a className="text-[#3779a6]">Leaflet</a> | © <a className="text-[#3779a6]">OpenStreetMap</a> contributors
            </div>
          </div>
          <div className="grid grid-cols-2 gap-12 p-12 text-[#4a4a4a]">
            {STATS.map(({ icon: Icon, label, value, tone, fit, gap = "gap-[7px]" }) => (
              <div key={label} className="grid h-12 grid-cols-2 items-center gap-8">
                <span className={`flex h-12 items-center justify-center rounded-lg text-[25px] text-white ${gap} ${tone}`}>
                  <Icon className="h-6 w-auto" />
                  {label}
                </span>
                <span className={fit}>{value}</span>
              </div>
            ))}
          </div>
        </article>
      </main>
    </div>
  );
}
